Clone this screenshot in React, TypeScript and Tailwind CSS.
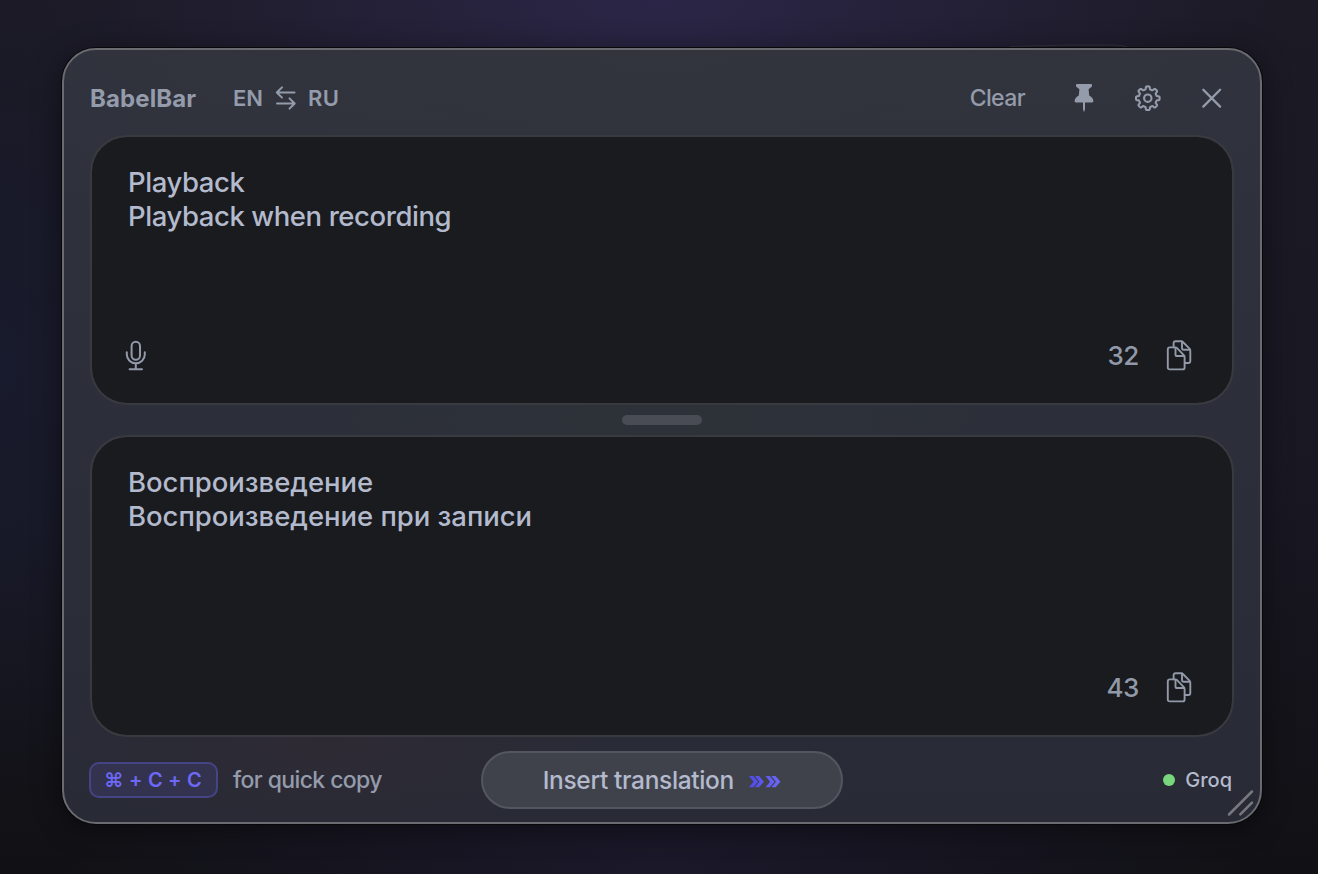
import type { ReactNode } from "react";

function gearPath(cx: number, cy: number, mid: number, amp: number) {
  const pts: string[] = [];
  const steps = 240;
  for (let i = 0; i < steps; i++) {
    const t = (i / steps) * Math.PI * 2;
    const r = mid + amp * (Math.tanh(3.2 * Math.cos(8 * t)) / Math.tanh(3.2));
    pts.push(`${(cx + r * Math.sin(t)).toFixed(2)} ${(cy - r * Math.cos(t)).toFixed(2)}`);
  }
  return `M${pts.join("L")}Z`;
}

function Swap() {
  return (
    <svg className="h-7 w-6" viewBox="0 0 24 28" fill="none" stroke="currentColor" strokeWidth="2" strokeLinecap="round" strokeLinejoin="round">
      <path d="M20.500 8.500H2.800M8 3.400 2.800 8.500 8 13.600M3 19.500h17.700M15.500 14.400l5.200 5.100-5.200 5.100" />
    </svg>
  );
}

function Pin() {
  return (
    <svg className="h-8 w-6" viewBox="0 0 24 32" fill="currentColor">
      <path d="M5.300 2h13.400c.900 0 1.300.500 1.300 1.200v.700c0 .500-.200.800-.600 1.100L16.600 7.300l.6 6.200c2.300 1.200 4 3.100 4.200 5.500.1.900-.500 1.400-1.300 1.400H3.900c-.800 0-1.400-.500-1.300-1.400.200-2.400 1.900-4.300 4.200-5.500l.6-6.200L4.600 5c-.400-.300-.600-.600-.600-1.100v-.700C4 2.500 4.400 2 5.300 2Z" />
      <path d="M11 20h2v7l-.6 2.500h-.8L11 27Z" />
    </svg>
  );
}

function Gear() {
  return (
    <svg className="h-7 w-7" viewBox="0 0 28 28" fill="none" stroke="currentColor" strokeWidth="2.100" strokeLinejoin="round">
      <path d={gearPath(13.8, 14.2, 10.4, 1.4)} />
      <circle cx="13.800" cy="14.200" r="3.700" />
    </svg>
  );
}

function Close() {
  return (
    <svg className="h-6 w-6" viewBox="0 0 24 24" fill="none" stroke="currentColor" strokeWidth="2.300" strokeLinecap="round">
      <path d="m3.300 3.800 16.800 16.800M20.100 3.800 3.300 20.600" />
    </svg>
  );
}

function Mic() {
  return (
    <svg className="h-8 w-6" viewBox="0 0 24 32" fill="none" stroke="currentColor" strokeWidth="2" strokeLinecap="round">
      <rect x="7.600" y="1.700" width="8.400" height="18" rx="4.200" />
      <path d="M2.800 12.200v2.300a9 8.800 0 0 0 18 0v-2.300M11.800 23.500v5.700M5.600 29.200h12.400" />
    </svg>
  );
}

function Copy() {
  return (
    <svg className="h-8 w-7" viewBox="0 0 28 32" fill="none" stroke="currentColor" strokeWidth="1.900" strokeLinejoin="round" strokeLinecap="round">
      <g transform="translate(0 -.8)">
        <path d="M4.800 8.200h5.200c.900 0 1.500.200 2.100.8l6.700 6.900c.6.600.8 1.200.8 2.100v10.200c0 1.300-.7 2-2 2H4.800c-1.300 0-2-.7-2-2v-18c0-1.300.7-2 2-2Z" />
        <path d="M10.500 8.500v6.700c0 1.100.5 1.600 1.600 1.600h7.200" />
        <path d="M8.600 8V4c0-1.300.7-2 2-2h5.200c.9 0 1.500.2 2.100.8l6.600 6.700c.6.600.8 1.200.8 2.100v10.200c0 1.300-.7 2-2 2h-3.500" />
        <path d="M17 2.300v6.600c0 1.100.5 1.600 1.600 1.600H25" />
      </g>
    </svg>
  );
}

function TextBox({ lines, count, mic, className, textClass }: { lines: string[]; count: string; mic?: ReactNode; className: string; textClass: string }) {
  return (
    <section className={`flex flex-col justify-between rounded-[37px] border-2 border-[#383a40] bg-[#191b1e] bg-clip-padding ${className}`}>
      <div className={`pl-[36px] pt-[28px] text-[27.500px] leading-[34px] text-[#b4bacd] [font-weight:450] ${textClass}`}>
        {lines.map((l) => (
          <p key={l} className="whitespace-nowrap">{l}</p>
        ))}
      </div>
      <div className="flex h-8 items-center pl-8 pr-[39px] text-[#9299a8]">
        {mic}
        <span className="ml-auto mr-[26px] text-[26px] font-medium leading-8 tracking-[-0.4px]">{count}</span>
        <Copy />
      </div>
    </section>
  );
}

export default function App() {
  return (
    <main className="relative h-[874px] w-[1318px] overflow-hidden bg-[#15151c] bg-[radial-gradient(ellipse_620px_300px_at_50%_0%,#2b2647_0%,#2b264700_100%),radial-gradient(ellipse_260px_420px_at_0%_42%,#181b2d_0%,#181b2d00_100%),radial-gradient(ellipse_600px_240px_at_50%_100%,#1b182a_0%,#1b182a00_100%),linear-gradient(180deg,#1c1a25_0%,#191722_55%,#111115_100%)] px-[62px] pt-12 font-['Inter',sans-serif]">
      <svg className="absolute left-[1010px] top-[42px] h-2 w-32" viewBox="0 0 128 8" fill="none" stroke="#34323d">
        <path d="M0 4.500 60 3h45q8 0 15 3" />
      </svg>
      <div className="relative flex h-[776px] w-[1200px] flex-col rounded-[34px] border-2 border-[#696b70] bg-[#2b2d38] bg-[radial-gradient(ellipse_700px_220px_at_50%_0%,#32353c_0%,#32353c00_100%),radial-gradient(ellipse_500px_120px_at_50%_48%,#2d3238_0%,#2d323800_100%),radial-gradient(ellipse_260px_90px_at_22%_90%,#2e2a34_0%,#2e2a3400_100%),linear-gradient(180deg,#30323d_0%,#2c2e3a_50%,#282a35_100%)] px-[26px] shadow-[0_0_0_1px_#08080b,0_4px_30px_#00000070]">
        <header className="flex h-[85px] items-center pt-[11px] text-[#949bab]">
          <h1 className="w-[143px] pt-[2px] text-[24px] font-bold leading-8 tracking-[0.1px]">BabelBar</h1>
          <div className="flex items-center text-[22px] font-semibold leading-8">
            <span className="w-[41px]">EN</span>
            <Swap />
            <span className="ml-[10px] tracking-[0.4px]">RU</span>
          </div>
          <span className="ml-auto text-[23px] leading-8 tracking-[-0.6px] [font-weight:450]">Clear</span>
          <div className="ml-[47px] mr-[10px] flex items-center gap-[38px]">
            <Pin />
            <Gear />
            <Close />
          </div>
        </header>
        <TextBox className="h-[270px] pb-[31px]" textClass="tracking-[-0.42px]" lines={["Playback", "Playback when recording"]} count="32" mic={<Mic />} />
        <div className="flex h-[30px] items-center justify-center">
          <div className="h-[10px] w-20 rounded-[5px] bg-[#4a4c55]" />
        </div>
        <TextBox className="h-[302px] pb-[31px]" textClass="tracking-[-0.04px]" lines={["Воспроизведение", "Воспроизведение при записи"]} count="43" />
        <footer className="grid h-[85px] grid-cols-[391px_362px_1fr] items-center">
          <div className="-ml-px flex items-center">
            <kbd className="flex h-9 w-[129px] items-center justify-center whitespace-nowrap rounded-[10px] border-2 border-[#454484] bg-[#333350] pr-px font-['Inter',sans-serif] text-[20px] font-semibold tracking-[0.2px] text-[#6d68f5]">⌘ + C + C</kbd>
            <span className="ml-[15px] whitespace-nowrap pt-[2px] text-[23px] tracking-[-0.6px] text-[#949bab] [font-weight:450]">for quick copy</span>
          </div>
          <button className="flex h-[58px] w-[362px] items-center justify-center rounded-[29px] border-2 border-[#53565f] bg-[#40424b] text-[24.500px] text-[#b4bacd]">
            <span className="pt-[2px] tracking-[-0.35px] [font-weight:450]">Insert translation</span>
            <span className="ml-[14px] bg-gradient-to-r from-[#4f48ea] to-[#6d68f5] bg-clip-text pt-px text-[24.500px] font-extrabold leading-8 tracking-[-0.3px] text-transparent">»»</span>
          </button>
          <div className="flex items-center justify-end pr-[2px] text-[20px] text-[#b4bacd] [font-weight:450]">
            <i className="mr-[10px] h-3 w-3 rounded-full bg-[#78d67c]" />
            <span>Groq</span>
          </div>
        </footer>
        <svg className="absolute bottom-[4px] right-[4px] h-8 w-8" viewBox="0 0 32 32" fill="none" stroke="#77797f" strokeWidth="2.500" strokeLinecap="round">
          <path d="M5 28.500 28 5.500M16.300 28.300 28 16.600" />
        </svg>
      </div>
    </main>
  );
}
